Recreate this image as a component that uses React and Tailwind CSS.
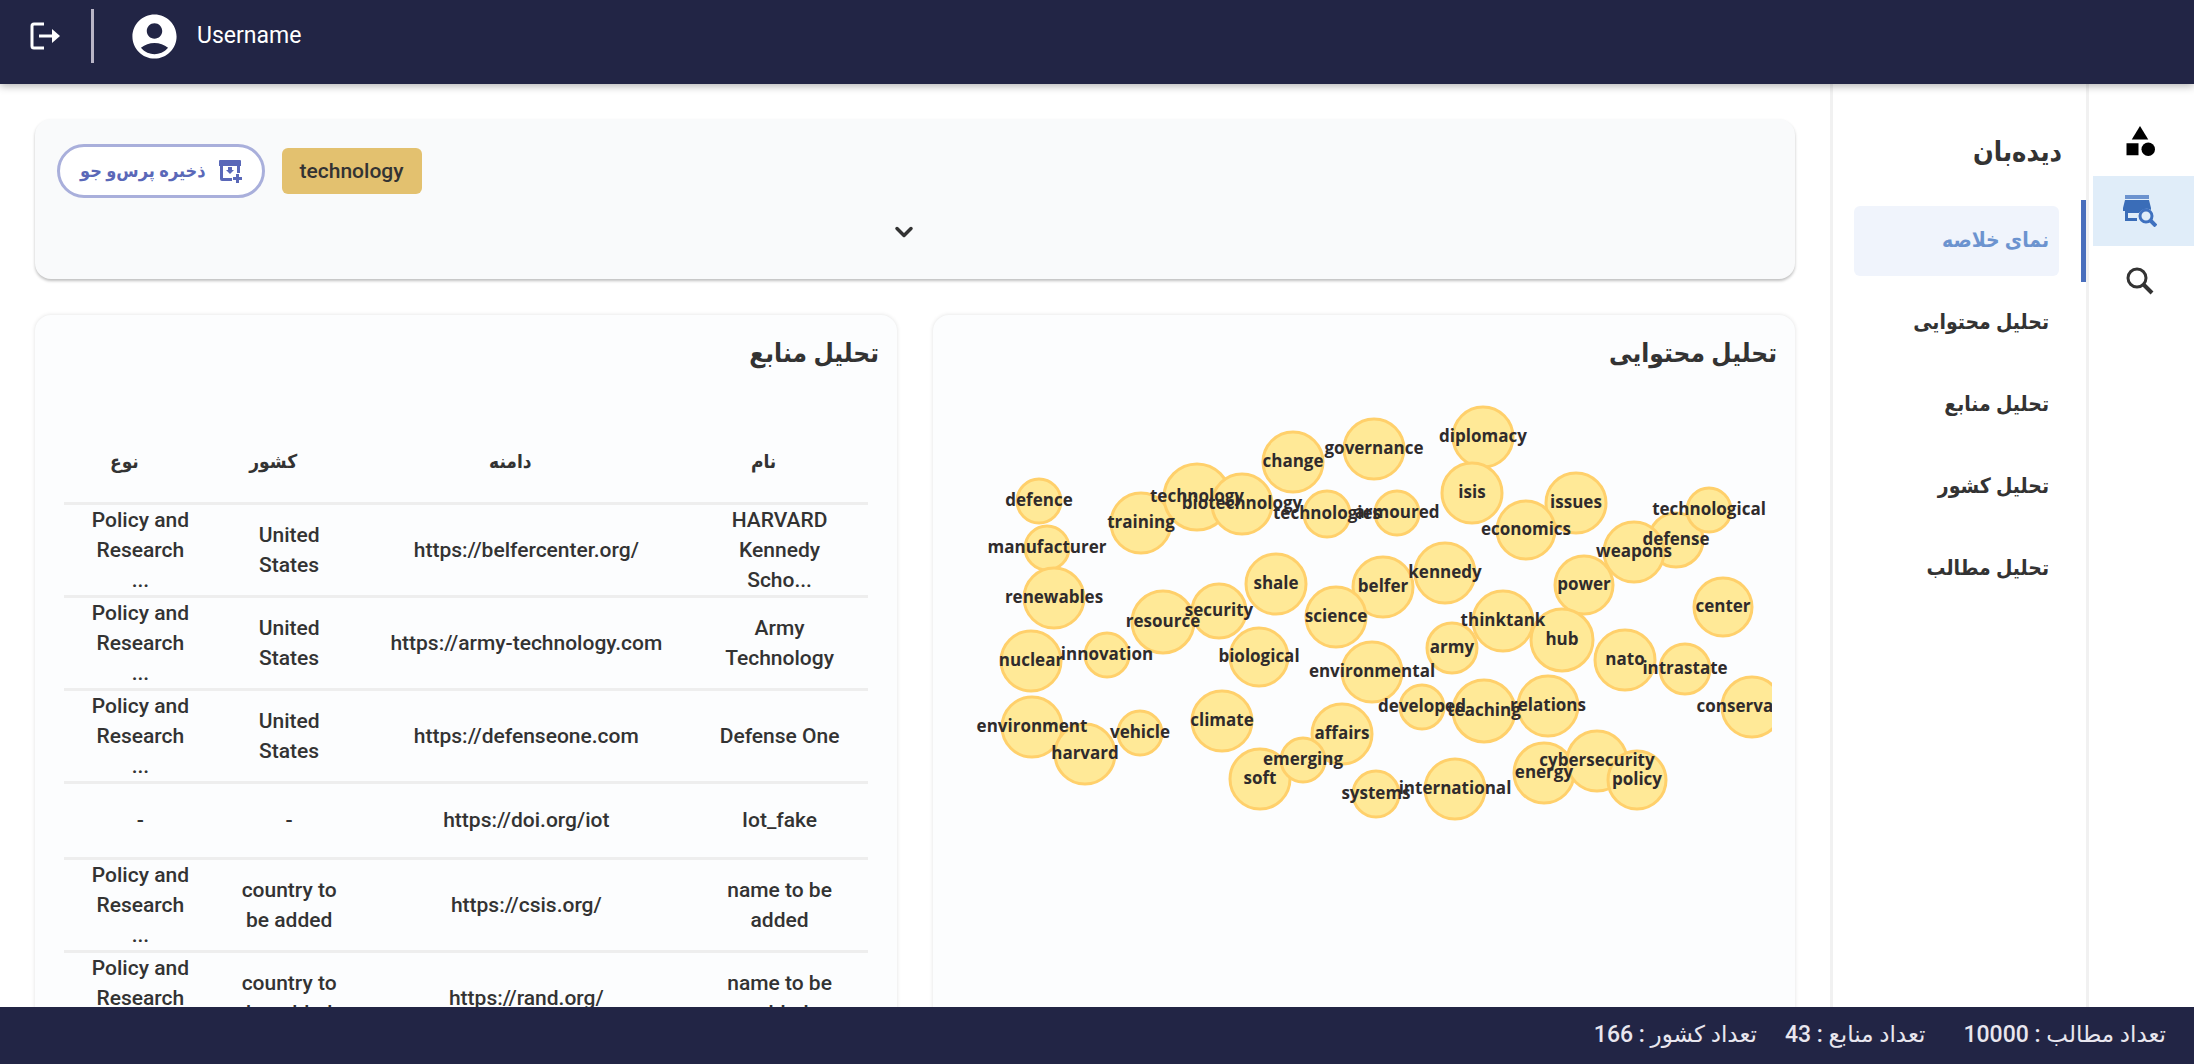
import React, { useState } from "react";
import { MdAccountCircle, MdCategory } from "react-icons/md";
import { ChevronDown } from "lucide-react";

const navItems = ["نمای خلاصه", "تحلیل محتوایی", "تحلیل منابع", "تحلیل کشور", "تحلیل مطالب"];

const columns = [
  { key: "name", label: "نام", width: "w-[22%]" },
  { key: "domain", label: "دامنه", width: "w-[41%]" },
  { key: "country", label: "کشور", width: "w-[18%]" },
  { key: "type", label: "نوع", width: "w-[19%]" },
];

const sources = [
  { name: "HARVARD\nKennedy\nScho...", domain: "https://belfercenter.org/", country: "United\nStates", type: "Policy and\nResearch\n..." },
  { name: "Army\nTechnology", domain: "https://army-technology.com", country: "United\nStates", type: "Policy and\nResearch\n..." },
  { name: "Defense One", domain: "https://defenseone.com", country: "United\nStates", type: "Policy and\nResearch\n..." },
  { name: "Iot_fake", domain: "https://doi.org/iot", country: "-", type: "-" },
  { name: "name to be\nadded", domain: "https://csis.org/", country: "country to\nbe added", type: "Policy and\nResearch\n..." },
  { name: "name to be\nadded", domain: "https://rand.org/", country: "country to\nbe added", type: "Policy and\nResearch\n..." },
];

// [label, x, y, radius]
const nodes = [
  ["defence", 1039, 501, 23],
  ["manufacturer", 1047, 548, 23],
  ["training", 1141, 523, 31],
  ["technology", 1197, 497, 34],
  ["biotechnology", 1242, 504, 31],
  ["technologies", 1327, 514, 24],
  ["change", 1293, 462, 31],
  ["governance", 1374, 449, 31],
  ["armoured", 1397, 513, 23],
  ["diplomacy", 1483, 437, 31],
  ["isis", 1472, 493, 31],
  ["issues", 1576, 503, 31],
  ["economics", 1526, 530, 30],
  ["defense", 1676, 540, 28],
  ["technological", 1709, 510, 23],
  ["weapons", 1634, 552, 31],
  ["renewables", 1054, 598, 31],
  ["nuclear", 1031, 661, 31],
  ["innovation", 1107, 655, 23],
  ["resource", 1163, 622, 32],
  ["security", 1219, 611, 28],
  ["shale", 1276, 584, 31],
  ["belfer", 1383, 587, 31],
  ["science", 1336, 617, 31],
  ["biological", 1259, 657, 30],
  ["environmental", 1372, 672, 31],
  ["environment", 1032, 727, 31],
  ["harvard", 1085, 754, 31],
  ["vehicle", 1140, 733, 23],
  ["climate", 1222, 721, 31],
  ["affairs", 1342, 734, 31],
  ["soft", 1260, 779, 31],
  ["emerging", 1303, 760, 23],
  ["systems", 1376, 794, 24],
  ["kennedy", 1445, 573, 31],
  ["power", 1584, 585, 30],
  ["center", 1723, 607, 30],
  ["thinktank", 1503, 621, 31],
  ["hub", 1562, 640, 32],
  ["army", 1452, 648, 26],
  ["nato", 1625, 660, 31],
  ["intrastate", 1685, 669, 26],
  ["developed", 1422, 707, 23],
  ["teaching", 1484, 711, 32],
  ["relations", 1548, 706, 31],
  ["conservation", 1752, 707, 31],
  ["energy", 1544, 773, 31],
  ["cybersecurity", 1597, 761, 31],
  ["policy", 1637, 780, 30],
  ["international", 1455, 789, 31],
];

function LogoutIcon() {
  return (
    <svg viewBox="0 0 32 30" className="h-[30px] w-8" fill="none" stroke="currentColor" strokeWidth="3">
      <path d="M15 3H5Q3 3 3 5V25Q3 27 5 27H15" />
      <path d="M10 15H24" />
      <path d="M23 8L31 15L23 22Z" fill="currentColor" stroke="none" />
    </svg>
  );
}

function SaveQueryIcon() {
  return (
    <svg viewBox="0 0 24 24" className="h-6 w-6" fill="currentColor">
      <path d="M2 1h20q1 0 1 1v5H1V2q0-1 1-1z" />
      <path d="M2 7h3v12h9v3H4q-2 0-2-2zM19 7h3v7h-3z" />
      <path d="M10 8h4v3h2l-4 4-4-4h2z" />
      <path d="M18 15h3v3h3v3h-3v3h-3v-3h-3v-3h3z" />
    </svg>
  );
}

function SourceSearchIcon() {
  return (
    <svg viewBox="0 0 34 32" className="h-8 w-[34px]" fill="none">
      <path d="M2 0h24v4H2z" fill="#6c93cf" />
      <path d="M2 5h24l2 8v2a9 9 0 0 0-12 3H5v5h9v3H2V16H0v-3z" fill="#3a6db8" />
      <circle cx="23" cy="21" r="6" stroke="#3f71bf" strokeWidth="3" />
      <path d="M27 25l6 6" stroke="#3f71bf" strokeWidth="4" />
    </svg>
  );
}

function SearchIcon() {
  return (
    <svg viewBox="0 0 28 28" className="size-7" fill="none" stroke="currentColor">
      <circle cx="11" cy="11" r="9" strokeWidth="3" />
      <path d="M17 17L26 26" strokeWidth="4" />
    </svg>
  );
}

function WordGraph() {
  return (
    <svg viewBox="956 393 816 440" className="w-full" direction="ltr">
      {nodes.map(([label, x, y, r]) => (
        <circle key={label} cx={x} cy={y} r={r - 1} fill="#ffe997" stroke="#ffd06b" strokeWidth="3" />
      ))}
      {nodes.map(([label, x, y]) => (
        <text key={label} x={x} y={y + 5} textAnchor="middle" fontSize="17" className="fill-[#2f2b2c] font-['Open_Sans',sans-serif] font-bold">
          {label}
        </text>
      ))}
    </svg>
  );
}

export default function App() {
  const [active, setActive] = useState(0);
  const [open, setOpen] = useState(false);

  return (
    <div dir="rtl" className="flex h-screen flex-col bg-white font-[Roboto,'DejaVu_Sans_Condensed','DejaVu_Sans',sans-serif] text-[#333]">
      <header dir="ltr" className="z-10 flex h-[84px] shrink-0 items-start bg-[#222545] pt-2 pl-[29px] text-white shadow-[0_2px_8px_rgba(0,0,0,0.3)]">
        <div className="flex h-14 items-center">
          <button aria-label="خروج">
            <LogoutIcon />
          </button>
          <div className="mr-[34px] ml-[30px] h-[54px] w-[3px] bg-[#b9b5c6]" />
          <MdAccountCircle className="size-[53px]" />
          <span className="ml-4 text-[23px]">Username</span>
        </div>
      </header>

      <div className="flex min-h-0 flex-1 overflow-hidden">
        {/* نوار آیکون‌ها */}
        <nav className="flex w-[108px] shrink-0 flex-col border-l-[3px] border-[#f1f1f1] pt-[22px]">
          <button aria-label="دسته‌بندی" className="flex h-[70px] items-center justify-center pr-1 text-black">
            <MdCategory className="size-9" />
          </button>
          <button aria-label="دیده‌بان" className="ml-1 flex h-[70px] items-center justify-center bg-[#e0edf9] pr-2">
            <SourceSearchIcon />
          </button>
          <button aria-label="جستجو" className="flex h-[70px] items-center justify-center pr-1">
            <SearchIcon />
          </button>
        </nav>

        <aside className="w-64 shrink-0 border-l-[3px] border-[#f1f1f1] pt-[50px]">
          <h1 className="pr-6 text-[27px] leading-9 font-bold">دیده‌بان</h1>
          <ul className="mt-[30px]">
            {navItems.map((item, i) => (
              <li key={item} className={`flex h-[82px] items-center border-r-[5px] pr-[22px] pl-[21px] ${active === i ? "border-[#4a6fbd]" : "border-transparent"}`}>
                <button
                  onClick={() => setActive(i)}
                  className={`h-[70px] w-full rounded-md px-[10px] text-right text-[21px] font-bold ${active === i ? "bg-[#f0f4fc] text-[#6c93cf]" : ""}`}
                >
                  {item}
                </button>
              </li>
            ))}
          </ul>
        </aside>

        <main className="flex min-w-0 flex-1 flex-col gap-9 px-[35px] pt-[35px]">
          <section className="flex h-40 shrink-0 flex-col items-center rounded-2xl bg-[#f9fafb] px-[22px] pt-[25px] shadow-[0_2px_3px_rgba(0,0,0,0.25)]">
            <div dir="ltr" className="flex w-full items-center gap-[17px]">
              <button dir="rtl" className="flex h-[54px] items-center gap-3 rounded-full border-[3px] border-[#a9afdb] bg-white px-5 text-lg font-bold text-[#5a68b8]">
                <SaveQueryIcon />
                ذخیره پرس‌و جو
              </button>
              <span className="rounded-md bg-[#e3c16f] px-[18px] py-2 text-[21px] leading-[30px] font-medium">technology</span>
            </div>
            <button aria-label="نمایش بیشتر" className="mt-5 mr-[22px]" onClick={() => setOpen(!open)}>
              <ChevronDown className={`size-7 ${open ? "rotate-180" : ""}`} strokeWidth={3} />
            </button>
          </section>

          <div className="grid grid-cols-2 items-start gap-9">
            <section className="min-h-[760px] rounded-2xl bg-[#fcfdfe] pt-[18px] shadow-[0_0_4px_rgba(0,0,0,0.12)]">
              <h2 className="pr-[18px] text-[26px] leading-10 font-bold">تحلیل محتوایی</h2>
              <div className="mt-5 px-[23px]">
                <WordGraph />
              </div>
            </section>

            <section className="min-h-[760px] rounded-2xl bg-[#fcfdfe] pt-[18px] shadow-[0_0_4px_rgba(0,0,0,0.12)]">
              <h2 className="pr-[18px] text-[26px] leading-10 font-bold">تحلیل منابع</h2>
              <div className="mt-[50px] px-[29px]">
                <table className="w-full table-fixed text-center text-[21px] leading-[30px] font-medium">
                  <thead>
                    <tr className="h-20 border-b-[3px] border-[#eeeeee]">
                      {columns.map((col) => (
                        <th key={col.key} className={`${col.width} pr-8 text-[19px] font-bold`}>
                          {col.label}
                        </th>
                      ))}
                    </tr>
                  </thead>
                  <tbody dir="ltr">
                    {sources.map((row, i) => (
                      <tr key={i} className="h-[76px] border-b-[3px] border-[#eeeeee]">
                        {columns.map((col) => (
                          <td key={col.key} className="whitespace-pre-line">
                            {row[col.key]}
                          </td>
                        ))}
                      </tr>
                    ))}
                  </tbody>
                </table>
              </div>
            </section>
          </div>
        </main>
      </div>

      <footer className="z-10 flex h-[57px] shrink-0 items-center bg-[#222545] px-7 font-[Roboto,'DejaVu_Sans',sans-serif] text-[23px] font-medium text-[#e8e6ee]">
        <span className="ml-[38px]">تعداد مطالب : 10000</span>
        <span className="ml-7">تعداد منابع : 43</span>
        <span>تعداد کشور : 166</span>
      </footer>
    </div>
  );
}
